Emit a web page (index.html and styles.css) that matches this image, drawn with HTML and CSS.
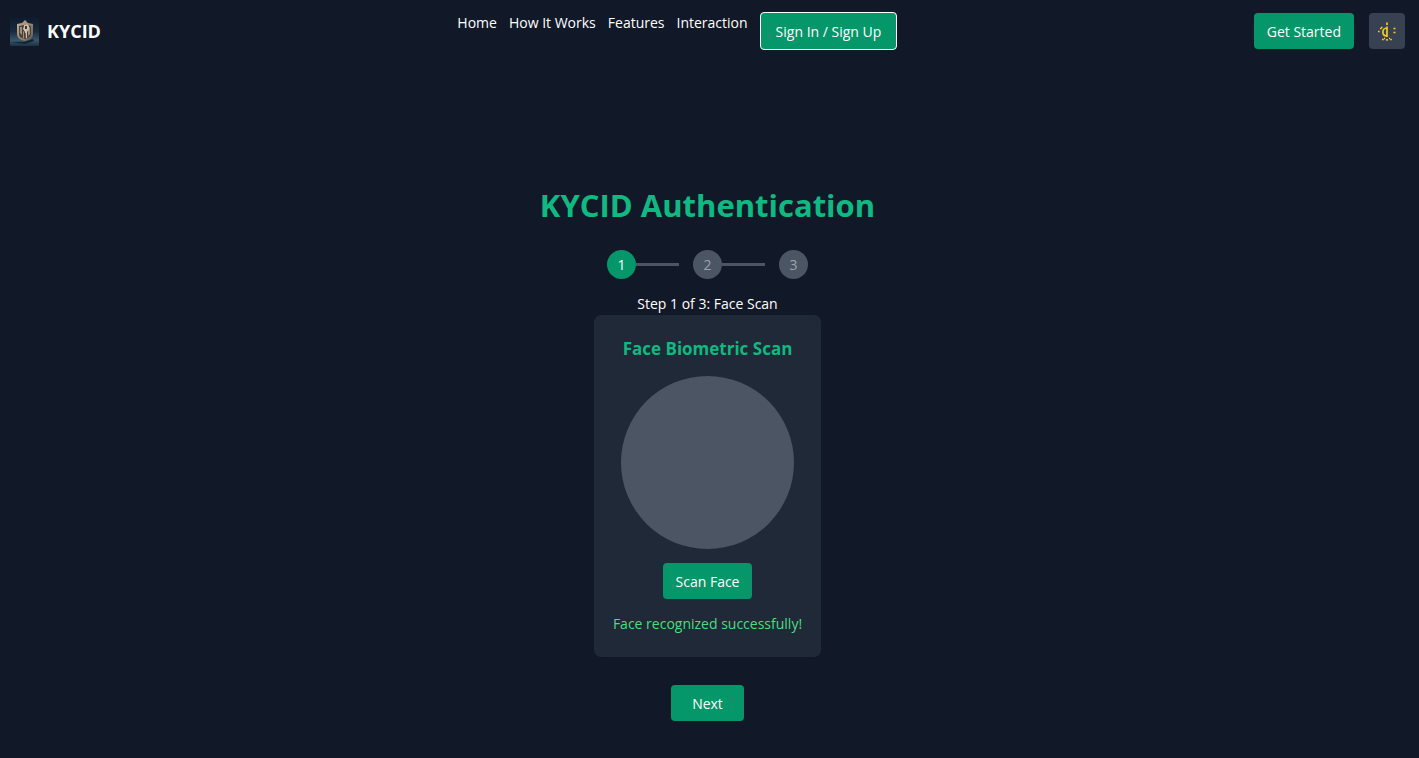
FILE: index.html
```html
<!DOCTYPE html>
<html lang="en">
<head>
<meta charset="utf-8">
<meta name="viewport" content="width=device-width, initial-scale=1">
<title>KYCID Authentication</title>
<link rel="stylesheet" href="styles.css">
</head>
<body>
<header class="navbar">
  <div class="brand">
    <svg class="brand-logo" viewBox="0 0 29 29" aria-hidden="true">
      <defs>
        <linearGradient id="sky" x1="0" y1="0" x2="0" y2="1">
          <stop offset="0" stop-color="#0e1a2a"/>
          <stop offset=".5" stop-color="#172c3f"/>
          <stop offset=".8" stop-color="#38566c"/>
          <stop offset="1" stop-color="#1e3042"/>
        </linearGradient>
        <linearGradient id="metal" x1="0" y1="0" x2="1" y2="1">
          <stop offset="0" stop-color="#c3b09a"/>
          <stop offset=".5" stop-color="#9b8873"/>
          <stop offset="1" stop-color="#65574c"/>
        </linearGradient>
      </defs>
      <rect width="29" height="29" fill="url(#sky)"/>
      <path d="M2 25l12 0 9-3 1 2-9 3z" fill="#142230"/>
      <path d="M7 7l5-1 3-3 3 3 5 1v10c0 4-4 6-8 7-5-1-8-3-8-8z" fill="url(#metal)"/>
      <path d="M9 9l5-1 2-1 5 2v8c0 3-3 4-6 5-4-1-6-2-6-5z" fill="#4a423c"/>
      <path d="M10 10h2v8l-2-2zM18 11l2-1v7l-2 2zM13 15v6l1 1v-8z" fill="#a08d77"/>
      <path d="M14 8l3-1 2 2v3l-2 3v6h-2v-6l-2-3 1-3z" fill="#d2c1aa"/>
      <path d="M15 9h2v3h-2z" fill="#39332f"/>
      <path d="M15 16h1v5h-1z" fill="#6b5c4e"/>
    </svg>
    <span class="brand-name">KYCID</span>
  </div>
  <nav class="nav-links" aria-label="Main">
    <a class="nav-link" href="#home">Home</a>
    <a class="nav-link" href="#how">How It Works</a>
    <a class="nav-link" href="#features">Features</a>
    <a class="nav-link" href="#interaction">Interaction</a>
    <button class="button button-outlined" type="button">Sign In / Sign Up</button>
  </nav>
  <div class="nav-actions">
    <button class="button" type="button">Get Started</button>
    <button class="theme-toggle" type="button" aria-label="Toggle theme">
      <svg class="theme-icon" viewBox="0 0 22 22" aria-hidden="true">
        <path d="M11 2.5v2.5M11 6.5v10.5M11 8c-5.5 0-5.500 8 0 8" fill="none" stroke="#facc15" stroke-width="1.7"/>
        <path d="M2 11.500h1.700M4 8.500h1.700M5 7.500h1.500M17.500 8.500h2M17.500 12.500h2M6 19.500h1.800M8 18.500h1.200M10.200 19.800h1.700M13 18.500h1M14.200 19.500h1.700" fill="none" stroke="#facc15" stroke-width="1.700"/>
      </svg>
    </button>
  </div>
</header>
<main class="auth">
  <h1 class="auth-title">KYCID Authentication</h1>
  <ol class="steps">
    <li class="step step-active">1</li>
    <li class="step-line" role="presentation"></li>
    <li class="step">2</li>
    <li class="step-line" role="presentation"></li>
    <li class="step">3</li>
  </ol>
  <p class="step-label">Step 1 of 3: Face Scan</p>
  <section class="card">
    <h2 class="card-title">Face Biometric Scan</h2>
    <div class="scan-area"></div>
    <button class="button" type="button">Scan Face</button>
    <p class="scan-result">Face recognized successfully!</p>
  </section>
  <button class="button button-wide" type="button">Next</button>
</main>
</body>
</html>
```
FILE: styles.css
```css
* {
  box-sizing: border-box;
}

body {
  margin: 0;
  padding-right: 4px;
  min-height: 100vh;
  background: #111827;
  color: #fff;
  font-family: "Segoe UI", "Open Sans", "Noto Sans", sans-serif;
  font-size: 14px;
  line-height: 22px;
}

h1,
h2,
p,
ol {
  margin: 0;
  padding: 0;
}

.navbar {
  display: flex;
  justify-content: space-between;
  align-items: center;
  padding: 12px 10px;
}

.brand {
  display: flex;
  align-items: center;
  gap: 8px;
}

.brand-logo {
  width: 29px;
  height: 29px;
}

.brand-name {
  font-size: 18px;
  font-weight: 700;
}

.nav-links {
  display: flex;
  align-items: flex-start;
  gap: 12px;
}

.nav-link {
  color: #fff;
  text-decoration: none;
}

.nav-actions {
  display: flex;
  align-items: center;
  gap: 15px;
}

.button {
  padding: 8px 13px 6px;
  border: 0;
  border-radius: 4px;
  background: #059669;
  color: #fff;
  font: inherit;
  cursor: pointer;
}

.button-outlined {
  padding: 8px 15px 6px;
  border: 1px solid #fff;
}

.button-wide {
  margin-top: 28px;
  padding: 8px 21px 6px;
}

.theme-toggle {
  display: grid;
  place-items: center;
  width: 36px;
  height: 36px;
  padding: 0;
  border: 0;
  border-radius: 4px;
  background: #374151;
  cursor: pointer;
}

.theme-icon {
  width: 22px;
  height: 22px;
}

.auth {
  display: flex;
  flex-direction: column;
  align-items: center;
  padding: 123px 16px 37px;
}

.auth-title {
  margin-bottom: 25px;
  color: #10b981;
  font-size: 31px;
  line-height: 40px;
}

.steps {
  display: flex;
  align-items: center;
  margin-bottom: 14px;
  list-style: none;
}

.step {
  display: grid;
  place-items: center;
  width: 29px;
  height: 29px;
  border-radius: 50%;
  background: #4b5563;
  color: #9ca3af;
}

.step-active {
  background: #059669;
  color: #fff;
}

.step-line {
  width: 43px;
  height: 3px;
  margin-right: 14px;
  background: #4b5563;
}

.card {
  display: flex;
  flex-direction: column;
  align-items: center;
  gap: 14px;
  padding: 21px 19px 22px;
  border-radius: 7px;
  background: #1f2937;
}

.card-title {
  color: #10b981;
  font-size: 17px;
  line-height: 26px;
}

.scan-area {
  width: 173px;
  height: 173px;
  border-radius: 50%;
  background: #4b5563;
}

.scan-result {
  color: #4ade80;
}
```
